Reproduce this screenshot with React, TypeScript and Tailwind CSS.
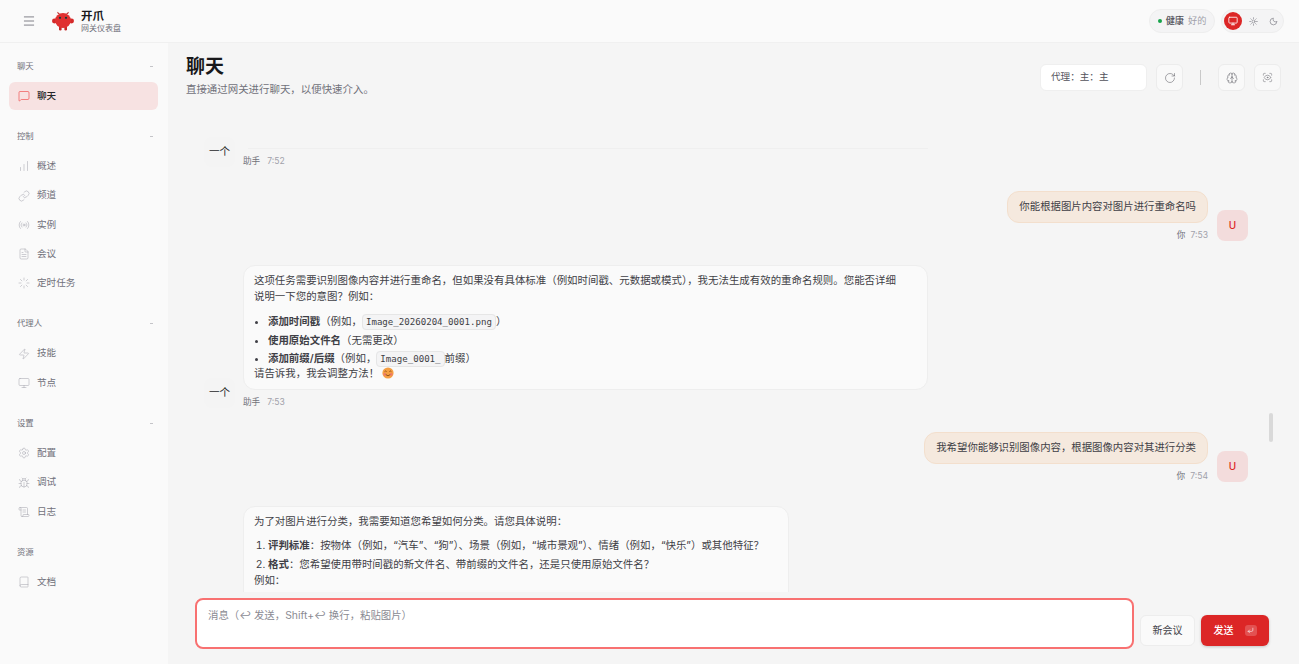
import React from "react";
import {
  Menu, MessageSquare, ChartNoAxesColumnIncreasing, Link, Radio, FileText, Loader,
  Zap, Monitor, Settings, Bug, ScrollText, Book, Sun, Moon, RotateCw, Brain, ScanEye, CornerDownLeft,
} from "lucide-react";

const font = { fontFamily: '"Inter", "Noto Sans CJK SC", sans-serif' };

const groups = [
  { label: "聊天", items: [{ t: "聊天", I: MessageSquare, active: true }] },
  { label: "控制", items: [
    { t: "概述", I: ChartNoAxesColumnIncreasing }, { t: "频道", I: Link }, { t: "实例", I: Radio },
    { t: "会议", I: FileText }, { t: "定时任务", I: Loader },
  ] },
  { label: "代理人", items: [{ t: "技能", I: Zap }, { t: "节点", I: Monitor }] },
  { label: "设置", items: [{ t: "配置", I: Settings }, { t: "调试", I: Bug }, { t: "日志", I: ScrollText }] },
  { label: "资源", items: [{ t: "文档", I: Book }], noDash: true },
];

function Logo() {
  return (
    <svg width="22" height="20" viewBox="0 0 22 20">
      <path d="M6 3 L5 0.8 L8 2.4 Z M16 3 L17 0.8 L14 2.4 Z" fill="#b91c1c" />
      <ellipse cx="2.4" cy="10" rx="2.4" ry="2.4" fill="#d42a2a" />
      <ellipse cx="19.6" cy="10" rx="2.4" ry="2.4" fill="#d42a2a" />
      <rect x="7" y="15" width="2.6" height="4.5" rx="1.2" fill="#c62828" />
      <rect x="12.4" y="15" width="2.6" height="4.5" rx="1.2" fill="#c62828" />
      <ellipse cx="11" cy="9.5" rx="8" ry="7.5" fill="#e03131" />
      <circle cx="8" cy="6.8" r="1.1" fill="#0f3a3a" />
      <circle cx="14" cy="6.8" r="1.1" fill="#0f3a3a" />
    </svg>
  );
}

function Smile() {
  return (
    <svg width="12" height="12" viewBox="0 0 12 12" className="inline-block align-[-2px]">
      <circle cx="6" cy="6" r="5.6" fill="#f59e42" />
      <circle cx="2.8" cy="7.4" r="1.3" fill="#ef7a6a" />
      <circle cx="9.2" cy="7.4" r="1.3" fill="#ef7a6a" />
      <path d="M2.6 4.6 Q3.6 3.4 4.6 4.6 M7.4 4.6 Q8.4 3.4 9.4 4.6" stroke="#7c3f12" strokeWidth=".8" fill="none" />
      <path d="M3.8 7.6 Q6 10 8.2 7.6" stroke="#7c3f12" strokeWidth=".8" fill="none" />
    </svg>
  );
}

function Code({ children }: { children: React.ReactNode }) {
  return (
    <code className="rounded-[4px] border border-[#e6e6e6] bg-[#f4f4f5] px-[3px] py-[2px] text-[9.1px] text-[#3f3f46]" style={{ fontFamily: '"DejaVu Sans Mono", monospace' }}>
      {children}
    </code>
  );
}

function Assistant({ time, children, bubble, w }: { time: string; children?: React.ReactNode; bubble: string; w: string }) {
  return (
    <div className="flex shrink-0 items-end gap-[8px]">
      <div className="flex h-[30px] w-[31px] shrink-0 items-center justify-center rounded-[8px] bg-[#f4f4f4] text-[10.6px] text-[#27272a]">一个</div>
      <div className={`flex flex-col ${w}`}>
        <div className={bubble}>{children}</div>
        <div className="mt-[6px] flex h-[12px] items-end gap-[7px] text-[8.6px] leading-[11px] text-[#71717a]">
          <span>助手</span><span className="text-[#a1a1aa]">{time}</span>
        </div>
      </div>
    </div>
  );
}

function User({ text, time }: { text: string; time: string }) {
  return (
    <div className="flex shrink-0 items-end justify-end gap-[9px]">
      <div className="flex flex-col items-end">
        <div className="flex h-[32px] items-center rounded-[12px] border border-[#f3dfcd] bg-[#f5e9de] px-[11px] text-[10.4px] text-[#3f3f46]">{text}</div>
        <div className="mt-[6px] flex h-[12px] items-end gap-[5px] text-[8.6px] leading-[11px] text-[#71717a]">
          <span>你</span><span className="text-[#a1a1aa]">{time}</span>
        </div>
      </div>
      <div className="flex h-[31px] w-[31px] shrink-0 items-center justify-center rounded-[8px] bg-[#f3dcdc] text-[10px] font-medium text-[#dc2626]">U</div>
    </div>
  );
}

const bubbleCls = "rounded-[12px] border border-[#eeeeee] bg-[#fafafa] pl-[10px] text-[10.45px] leading-[16px] text-[#3f3f46]";

export default function App() {
  return (
    <div className="flex h-screen w-full flex-col overflow-hidden bg-[#f5f5f5]" style={font}>
      <header className="flex h-[43px] shrink-0 items-center justify-between border-b border-[#f0f0f0] bg-[#fafafa] pl-[22px] pr-[15px]">
        <div className="flex items-center">
          <Menu size={14} strokeWidth={1.5} className="text-[#71717a]" />
          <div className="ml-[16px]"><Logo /></div>
          <div className="ml-[7px] flex flex-col">
            <span className="text-[11.5px] font-bold leading-[14px] text-[#18181b]">开爪</span>
            <span className="text-[8px] leading-[10px] text-[#71717a]">网关仪表盘</span>
          </div>
        </div>
        <div className="flex items-center gap-[6px]">
          <div className="flex h-[24px] w-[66px] items-center justify-center gap-[4px] rounded-full border border-[#eeeeee] bg-[#f4f4f5] text-[9.2px]">
            <span className="h-[4px] w-[4px] rounded-full bg-[#16a34a]" />
            <span className="font-medium text-[#52525b]">健康</span>
            <span className="text-[#a1a1aa]">好的</span>
          </div>
          <div className="flex h-[24px] w-[63px] items-center gap-[2px] rounded-full border border-[#eeeeee] bg-[#f4f4f5] pl-[2px]">
            <span className="flex h-[18px] w-[18px] items-center justify-center rounded-full bg-[#dc2626]"><Monitor size={10} className="text-white" /></span>
            <span className="flex w-[18px] justify-center"><Sun size={9} className="text-[#8a8a92]" /></span>
            <span className="flex w-[18px] justify-center"><Moon size={9} className="text-[#8a8a92]" /></span>
          </div>
        </div>
      </header>
      <div className="flex min-h-0 flex-1">
        <aside className="flex w-[168px] shrink-0 flex-col bg-[#fafafa] pl-[9px] pr-[10px] pt-[17px]">
          {groups.map((g) => (
            <div key={g.label} className="mb-[20.25px] flex flex-col">
              <div className="mb-[10px] flex h-[12px] items-center justify-between pl-[8px] pr-[5px] text-[8.4px] text-[#71717a]">
                <span>{g.label}</span>
                {!g.noDash && <span className="h-px w-[3px] bg-[#c4c4c8]" />}
              </div>
              <div className="flex flex-col gap-[1.3px]">
                {g.items.map(({ t, I, active }: any) => (
                  <div key={t} className={`flex h-[28px] items-center gap-[7px] rounded-[6px] pl-[9px] text-[9.6px] ${active ? "bg-[#f7e2e2] font-medium text-[#27272a]" : "text-[#71717a]"}`}>
                    <I size={12} strokeWidth={active ? 1.25 : 1} className={active ? "text-[#ef4444]" : "text-[#a1a1aa]"} />
                    <span>{t}</span>
                  </div>
                ))}
              </div>
            </div>
          ))}
        </aside>
        <main className="flex min-w-0 flex-1 flex-col px-[18px]">
          <div className="flex h-[67px] shrink-0 items-start justify-between">
            <div className="flex flex-col pt-[12px]">
              <h1 className="text-[19px] font-bold leading-[24px] text-[#18181b]">聊天</h1>
              <p className="mt-[4px] text-[10.45px] leading-[14px] text-[#71717a]">直接通过网关进行聊天，以便快速介入。</p>
            </div>
            <div className="flex items-center pt-[21px]">
              <div className="flex h-[27px] w-[107px] items-center rounded-[6px] border border-[#efefef] bg-white pl-[10px] text-[9.6px] text-[#52525b]">代理：主：主</div>
              <button className="ml-[9px] flex h-[27px] w-[27px] items-center justify-center rounded-[6px] border border-[#ececec] bg-[#f9f9f9]"><RotateCw size={12} strokeWidth={1} className="text-[#52525b]" /></button>
              <span className="ml-[17px] h-[15px] w-px bg-[#c9c9c9]" />
              <button className="ml-[17px] flex h-[27px] w-[27px] items-center justify-center rounded-[6px] border border-[#ececec] bg-[#f9f9f9]"><Brain size={12} strokeWidth={1} className="text-[#52525b]" /></button>
              <button className="ml-[9px] flex h-[27px] w-[27px] items-center justify-center rounded-[6px] border border-[#ececec] bg-[#f9f9f9]"><ScanEye size={11} strokeWidth={1} className="text-[#52525b]" /></button>
            </div>
          </div>
          <div className="relative flex min-h-0 flex-1 flex-col gap-[24px] overflow-hidden pl-[18px] pr-[33px] pt-[27px]">
            <Assistant time="7:52" w="w-[685px]" bubble="ml-[5px] h-[1px] bg-[#efefef]" />
            <User text="你能根据图片内容对图片进行重命名吗" time="7:53" />
            <Assistant time="7:53" w="w-[685px]" bubble={`${bubbleCls} h-[125px] pr-[24px] pt-[7px]`}>
              <p>这项任务需要识别图像内容并进行重命名，但如果没有具体标准（例如时间戳、元数据或模式），我无法生成有效的重命名规则。您能否详细说明一下您的意图？例如：</p>
              <ul className="mt-[9px] flex list-disc flex-col gap-[2.5px] pl-[14px]">
                <li><b className="font-semibold">添加时间戳</b>（例如，<Code>Image_20260204_0001.png</Code>）</li>
                <li><b className="font-semibold">使用原始文件名</b>（无需更改）</li>
                <li><b className="font-semibold">添加前缀/后缀</b>（例如，<Code>Image_0001_</Code>前缀）</li>
              </ul>
              <p className="-mt-[1px]">请告诉我，我会调整方法！ <Smile /></p>
            </Assistant>
            <User text="我希望你能够识别图像内容，根据图像内容对其进行分类" time="7:54" />
            <div className={`${bubbleCls} ml-[39px] h-[220px] w-[546px] shrink-0 pr-[10px] pt-[7px]`}>
              <p>为了对图片进行分类，我需要知道您希望如何分类。请您具体说明：</p>
              <ol className="mt-[8px] flex list-decimal flex-col gap-[3px] pl-[14px]">
                <li><b className="font-semibold">评判标准</b>：按物体（例如，“汽车”、“狗”）、场景（例如，“城市景观”）、情绪（例如，“快乐”）或其他特征？</li>
                <li><b className="font-semibold">格式</b>：您希望使用带时间戳的新文件名、带前缀的文件名，还是只使用原始文件名？</li>
              </ol>
              <p>例如：</p>
            </div>
            <div className="absolute right-[8px] top-[303px] h-[29px] w-[4px] rounded-full bg-[#d9d9d9]" />
          </div>
          <div className="flex h-[72px] shrink-0 items-start gap-[6px] pl-[9px] pr-[12px] pt-[6px]">
            <div className="h-[51px] w-[939px] rounded-[8px] border-2 border-[#f87171] bg-white pl-[11px] pt-[9px] text-[10.4px] leading-[14px] text-[#8a8a92]">消息（↩ 发送，Shift+↩ 换行，粘贴图片）</div>
            <div className="mt-[17px] flex h-[31px] w-[55px] items-center justify-center rounded-[6px] border border-[#ededed] bg-[#fafafa] text-[10px] text-[#3f3f46]">新会议</div>
            <div className="mt-[17px] flex h-[31px] w-[68px] items-center justify-center gap-[11px] rounded-[6px] bg-[#dc2626] text-[10px] font-medium text-white shadow-[0_1px_3px_rgba(0,0,0,0.2)]">
              发送
              <span className="flex h-[11px] w-[12px] items-center justify-center rounded-[3px] bg-white/20"><CornerDownLeft size={7} /></span>
            </div>
          </div>
        </main>
      </div>
    </div>
  );
}
